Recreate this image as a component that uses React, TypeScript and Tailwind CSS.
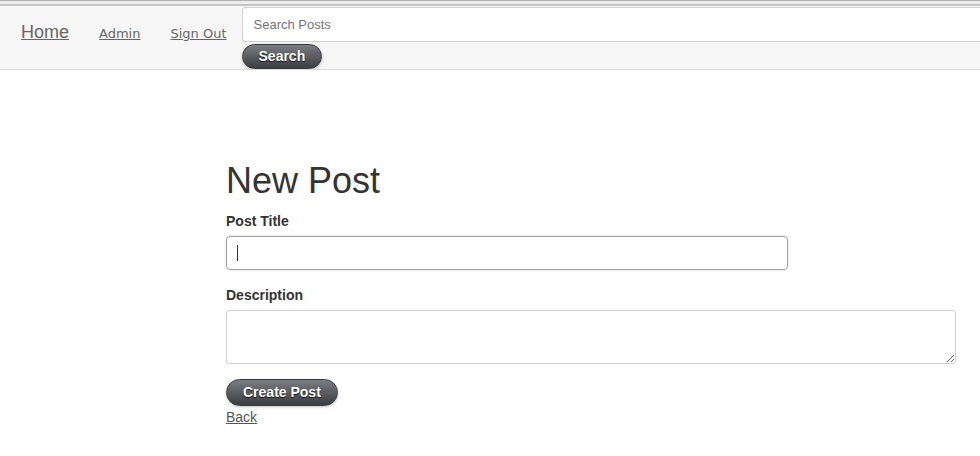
import React from 'react';

const btn =
  'rounded-full border border-[#3a3b3e] bg-gradient-to-b from-[#7a7d82] to-[#3b3d41] px-[16px] text-[14px] font-bold text-white [text-shadow:0_1px_1px_#111] shadow-[0_1px_3px_rgba(0,0,0,0.25)]';

const Header: React.FC = () => {
  return (
    <header className="border-t border-[#b0b0b0] bg-[#ececec] pt-[3px]">
      <div className="border-t-2 border-[#c4c4c4] border-b border-b-[#d9d9d9] bg-[#f6f6f6]">
        <nav className="flex h-[63px] overflow-hidden pl-[6px]">
          <div className="flex shrink-0 items-baseline whitespace-nowrap pt-[16px] leading-[20px] text-[#666]">
            <a href="#" className="px-[15px] text-[18px] underline font-['Liberation_Sans',Arial,sans-serif]">Home</a>
            <a href="#" className="px-[15px] text-[13px] underline font-['DejaVu_Sans',Verdana,sans-serif]">Admin</a>
            <a href="#" className="px-[15px] text-[13px] underline font-['DejaVu_Sans',Verdana,sans-serif]">Sign Out</a>
          </div>
          <form className="flex shrink-0 flex-col items-start pt-[1px] font-['Liberation_Sans',Arial,sans-serif]">
            <input
              type="text"
              placeholder="Search Posts"
              className="h-[35px] w-[760px] shrink-0 rounded-[3px] border border-[#cfcfcf] bg-white pl-[11px] text-[13px] text-[#333] placeholder:text-[#757575] outline-none"
            />
            <button type="button" className={`${btn} mt-[2px] h-[26px] text-[13.5px]`}>Search</button>
          </form>
        </nav>
      </div>
    </header>
  );
};

const App: React.FC = () => {
  return (
    <div className="min-h-screen bg-white text-[#333] font-['Liberation_Sans',Arial,sans-serif]">
      <Header />
      <main className="ml-[226px] w-[730px] pt-[91px]">
        <h1 className="mb-[10px] text-[36px] leading-[1.1]">New Post</h1>
        <form>
          <div className="mb-[15px]">
            <label className="mb-[5px] block text-[14px] font-bold leading-[20px]">Post Title</label>
            <div className="relative w-[562px]">
              <input
                type="text"
                className="block h-[34px] w-full rounded-[4px] border border-[#a3a3a3] bg-white px-[10px] text-[14px] outline-none shadow-[0_0_3px_rgba(0,0,0,0.15)]"
              />
              <span className="absolute left-[11px] top-[9px] h-[16px] w-px bg-[#333]" />
            </div>
          </div>
          <div className="mb-[15px]">
            <label className="mb-[5px] block text-[14px] font-bold leading-[20px]">Description</label>
            <textarea className="block h-[54px] w-full rounded-[3px] border border-[#cfcfcf] bg-white px-[10px] py-[6px] text-[14px] outline-none" />
          </div>
          <button type="button" className={`${btn} block h-[27px]`}>Create Post</button>
          <a href="#" className="mt-[1px] block w-fit text-[14px] leading-[20px] text-[#555] underline">Back</a>
        </form>
      </main>
    </div>
  );
};

export default App;
